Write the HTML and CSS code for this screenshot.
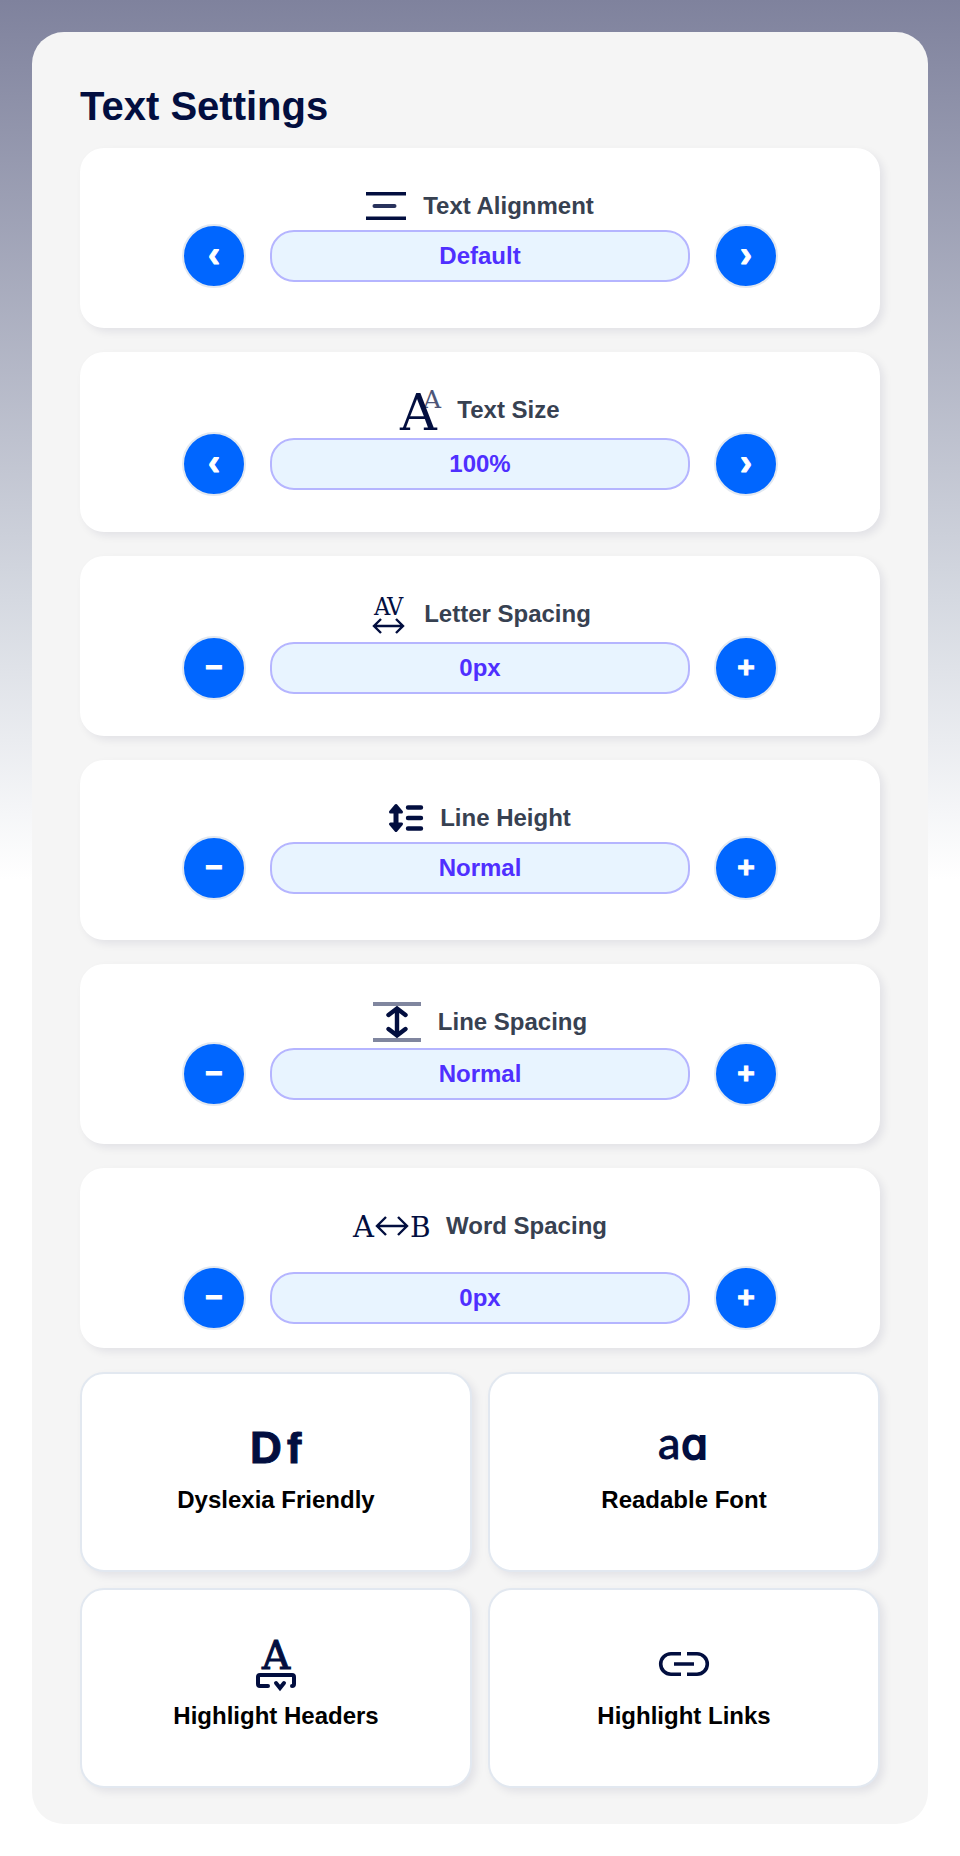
FILE: index.html
```html
<!DOCTYPE html>
<html lang="en">
<head>
    <meta charset="UTF-8">
    <meta name="viewport" content="width=device-width, initial-scale=1.0">
    <link rel="stylesheet" href="styles.css">
    <title>Text Settings</title>
</head>
<body>
    <main class="panel">
        <h1 class="panel-title">Text Settings</h1>

        <div class="settings">
            <section class="setting">
                <h2 class="setting-header">
                    <svg class="icon" width="40" height="28" viewBox="0 0 40 28" aria-hidden="true">
                        <path d="M0 1.7h40M0 26.3h40" stroke-width="3.4"/>
                        <path d="M8.5 14h20" stroke-width="4" stroke-linecap="round" opacity=".85"/>
                    </svg>
                    Text Alignment
                </h2>
                <div class="controls">
                    <button class="round-btn arrow-btn" aria-label="Previous alignment">‹</button>
                    <output class="value">Default</output>
                    <button class="round-btn arrow-btn" aria-label="Next alignment">›</button>
                </div>
            </section>

            <section class="setting setting-tall">
                <h2 class="setting-header">
                    <svg class="icon icon-serif" width="40" height="42" viewBox="0 0 40 42" aria-hidden="true">
                        <text x="0" y="41" font-size="51">A</text>
                        <text x="23" y="19" font-size="25" opacity=".7">A</text>
                    </svg>
                    Text Size
                </h2>
                <div class="controls">
                    <button class="round-btn arrow-btn" aria-label="Smaller text">‹</button>
                    <output class="value">100%</output>
                    <button class="round-btn arrow-btn" aria-label="Larger text">›</button>
                </div>
            </section>

            <section class="setting setting-tall">
                <h2 class="setting-header">
                    <svg class="icon icon-condensed" width="38" height="40" viewBox="0 0 38 40" aria-hidden="true">
                        <text x="5" y="21" font-size="25">A</text>
                        <text x="18" y="21" font-size="25">V</text>
                        <path d="M5 32h29M12 25l-7 7 7 7M27 25l7 7-7 7" stroke-width="2.4"/>
                    </svg>
                    Letter Spacing
                </h2>
                <div class="controls">
                    <button class="round-btn" aria-label="Decrease letter spacing">−</button>
                    <output class="value">0px</output>
                    <button class="round-btn" aria-label="Increase letter spacing">+</button>
                </div>
            </section>

            <section class="setting">
                <h2 class="setting-header">
                    <svg class="icon" width="34" height="28" viewBox="0 0 34 28" aria-hidden="true">
                        <path d="M7 4v20" stroke-width="5"/>
                        <path d="M19 3.500h13M19 14h13M19 24.500h13" stroke-width="4.400" stroke-linecap="round"/>
                        <path class="solid" d="M1.500 8L7 1.500 12.500 8zM1.500 20L7 26.500 12.500 20z" stroke-width="3" stroke-linejoin="round"/>
                    </svg>
                    Line Height
                </h2>
                <div class="controls">
                    <button class="round-btn" aria-label="Decrease line height">−</button>
                    <output class="value">Normal</output>
                    <button class="round-btn" aria-label="Increase line height">+</button>
                </div>
            </section>

            <section class="setting setting-medium">
                <h2 class="setting-header">
                    <svg class="icon" width="48" height="40" viewBox="0 0 48 40" aria-hidden="true">
                        <path d="M0 2h48M0 38h48" stroke-width="4" opacity=".5"/>
                        <path d="M24 7v26M15.5 13l8.5-6.5 8.5 6.5M15.5 27l8.5 6.5 8.5-6.5" stroke-width="4.4" stroke-linecap="round"/>
                    </svg>
                    Line Spacing
                </h2>
                <div class="controls">
                    <button class="round-btn" aria-label="Decrease line spacing">−</button>
                    <output class="value">Normal</output>
                    <button class="round-btn" aria-label="Increase line spacing">+</button>
                </div>
            </section>

            <section class="setting setting-loose">
                <h2 class="setting-header">
                    <svg class="icon icon-serif" width="76" height="24" viewBox="0 0 76 24" aria-hidden="true">
                        <text x="0" y="23" font-size="29">A</text>
                        <path d="M24 12h30M33 3l-9 9 9 9M45 3l9 9-9 9" stroke-width="2.4"/>
                        <text x="57" y="23" font-size="28">B</text>
                    </svg>
                    Word Spacing
                </h2>
                <div class="controls">
                    <button class="round-btn" aria-label="Decrease word spacing">−</button>
                    <output class="value">0px</output>
                    <button class="round-btn" aria-label="Increase word spacing">+</button>
                </div>
            </section>
        </div>

        <div class="options">
            <button class="option">
                <svg class="icon icon-bold" width="50" height="50" viewBox="0 0 50 50" aria-hidden="true">
                    <text x="-1" y="39" font-size="44">D</text>
                    <text x="36" y="39" font-size="43">f</text>
                </svg>
                Dyslexia Friendly
            </button>
            <button class="option">
                <svg class="icon icon-outlined" width="50" height="50" viewBox="0 0 50 50" aria-hidden="true">
                    <text class="lato" x="-1" y="35" font-size="45">a</text>
                    <text class="single" x="22" y="35" font-size="43">ɑ</text>
                </svg>
                Readable Font
            </button>
            <button class="option">
                <svg class="icon icon-serif" width="40" height="50" viewBox="0 0 40 50" aria-hidden="true">
                    <text class="thick" x="6" y="29" font-size="39">A</text>
                    <path d="M12 46H4q-2 0-2-2v-7q0-2 2-2h32q2 0 2 2v7q0 2-2 2" stroke-width="4" stroke-linecap="round"/>
                    <path d="M20 43l4 5 4-5" stroke-width="4" stroke-linecap="round"/>
                </svg>
                Highlight Headers
            </button>
            <button class="option">
                <svg class="icon" width="50" height="50" viewBox="0 0 50 50" aria-hidden="true">
                    <path d="M22 13.7H12a10.3 10.3 0 0 0 0 20.6h10M28 13.7h10a10.3 10.3 0 0 1 0 20.6H28M15 24h20" stroke-width="3.6"/>
                </svg>
                Highlight Links
            </button>
        </div>
    </main>
</body>
</html>
```

FILE: styles.css
```css
* {
    box-sizing: border-box;
}

body {
    margin: 0;
    padding: 32px;
    background: #ffffff linear-gradient(#7f829d, #d5d9e1 600px, #ffffff 880px) no-repeat;
    font-family: "Liberation Sans", Arial, sans-serif;
}

.panel {
    padding: 48px 48px 36px;
    border-radius: 32px;
    background-color: #f5f5f5;
}

.panel-title {
    margin: 0 0 16px;
    font-size: 40px;
    line-height: 52px;
    color: #020e3f;
}

.settings {
    display: flex;
    flex-direction: column;
    gap: 24px;
}

.setting {
    min-height: 180px;
    padding: 40px 16px 16px;
    border-radius: 24px;
    background-color: #ffffff;
    box-shadow: 4px 4px 8px rgba(2, 14, 63, 0.08);
}

.setting-header {
    display: flex;
    align-items: center;
    justify-content: center;
    gap: 17px;
    height: 36px;
    margin: 0;
    font-size: 24px;
    color: #374151;
}

.controls {
    display: flex;
    align-items: center;
    justify-content: center;
    gap: 24px;
}

.setting-medium .controls {
    margin-top: 2px;
}

.setting-tall .controls {
    margin-top: 4px;
}

.setting-loose .controls {
    margin-top: 22px;
}

.round-btn {
    width: 64px;
    height: 64px;
    padding: 0 0 2px;
    border: 2px solid #e2e8f0;
    border-radius: 50%;
    background-color: #0066ff;
    font-family: inherit;
    font-size: 30px;
    font-weight: bold;
    color: #ffffff;
    -webkit-text-stroke: 1px #ffffff;
    cursor: pointer;
}

.arrow-btn {
    font-size: 36px;
}

.value {
    flex: 0 1 420px;
    height: 52px;
    border: 2px solid #b5b5ff;
    border-radius: 24px;
    background-color: #e8f4ff;
    font-size: 24px;
    font-weight: bold;
    line-height: 48px;
    text-align: center;
    color: #4f2fff;
}

.options {
    display: grid;
    grid-template-columns: 1fr 1fr;
    gap: 16px;
    margin-top: 24px;
}

.option {
    display: flex;
    flex-direction: column;
    align-items: center;
    gap: 12px;
    min-height: 200px;
    padding: 50px 16px 16px;
    border: 2px solid #e2e8f0;
    border-radius: 24px;
    background-color: #ffffff;
    box-shadow: 4px 4px 8px rgba(2, 14, 63, 0.08);
    font-family: inherit;
    font-size: 24px;
    font-weight: bold;
    line-height: 28px;
    color: #000000;
    cursor: pointer;
}

.round-btn:hover {
    background-color: #0052cc;
}

.option:hover {
    border-color: #b5b5ff;
}

/* icons */
.icon {
    flex-shrink: 0;
    overflow: visible;
    fill: none;
    stroke: #020e3f;
}

.icon text {
    fill: #020e3f;
    stroke: none;
    font-weight: normal;
}

.icon .solid {
    fill: #020e3f;
}

.icon-serif text {
    font-family: "DejaVu Serif", serif;
}

.icon-condensed text {
    font-family: "DejaVu Serif Condensed", "DejaVu Serif", serif;
}

.icon-bold text {
    font-family: "Liberation Sans", sans-serif;
    font-weight: bold;
    stroke: #020e3f;
    stroke-width: 1px;
}

.icon-outlined text,
.icon .thick {
    stroke: #020e3f;
    stroke-width: 1px;
}

.icon .lato {
    font-family: Lato, sans-serif;
}

.icon .single {
    font-family: "DejaVu Sans", sans-serif;
    stroke-width: 2px;
}
```
